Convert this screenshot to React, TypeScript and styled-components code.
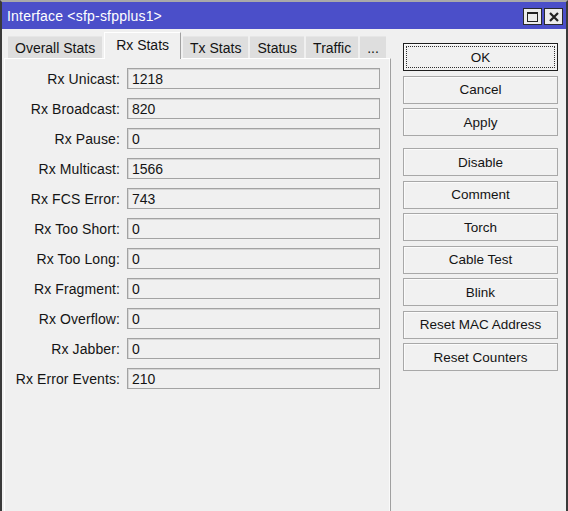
import React from 'react'
import styled, { createGlobalStyle, css } from 'styled-components'

const GlobalStyle = createGlobalStyle`
  html, body {
    margin: 0;
    padding: 0;
    background: #f0f0f0;
  }
  body {
    font-family: "Liberation Sans", Arial, sans-serif;
    color: #141414;
  }
`

const Window = styled.div`
  box-sizing: border-box;
  width: 568px;
  height: 511px;
  display: flex;
  flex-direction: column;
  background: #f0f0f0;
  border-top: 2px solid #a9a9a9;
  border-left: 2px solid #3a3a3a;
  border-right: 2px solid #3a3a3a;
  overflow: hidden;
`

const TitleBar = styled.div`
  height: 27px;
  flex: none;
  display: flex;
  align-items: center;
  justify-content: space-between;
  padding: 0 3px 0 5px;
  background: #4b4fc9;
  color: #fff;
  font-size: 14px;
  letter-spacing: 0.2px;
`

const TitleControls = styled.div`
  display: flex;
  gap: 2px;
  margin-top: 2px;
`

const ControlBox = styled.div`
  box-sizing: border-box;
  width: 19px;
  height: 17px;
  display: flex;
  align-items: center;
  justify-content: center;
  background: #ececec;
  border: 1px solid #2a2a2a;
`

const Body = styled.div`
  flex: 1;
  display: flex;
  min-height: 0;
`

const LeftColumn = styled.div`
  width: 389px;
  display: flex;
  flex-direction: column;
  padding-left: 2px;
  box-sizing: border-box;
`

const TabStrip = styled.div`
  height: 29px;
  flex: none;
  display: flex;
  align-items: flex-end;
  gap: 2px;
  padding-left: 4px;
  position: relative;
  z-index: 1;
`

const Tab = styled.div<{ $active?: boolean }>`
  box-sizing: border-box;
  height: 22px;
  display: flex;
  align-items: center;
  padding: 0 7px;
  font-size: 14px;
  background: #dedede;
  border-top: 1px solid #e6e6e6;
  white-space: nowrap;
  ${p => p.$active && css`
    height: 27px;
    margin-bottom: -1px;
    padding: 0 11px 2px;
    background: #f0f0f0;
    border-top: 1px solid #fff;
    border-left: 1px solid #fff;
    border-right: 1px solid #a0a0a0;
  `}
`

const Panel = styled.div`
  flex: 1;
  border-top: 1px solid #fff;
  border-left: 1px solid #fff;
  border-right: 1px solid #a0a0a0;
  box-shadow: inset -1px 0 0 #fafafa;
  padding-top: 9px;
  display: flex;
  flex-direction: column;
  gap: 9px;
`

const FieldRow = styled.div`
  display: grid;
  grid-template-columns: 115px 253px;
  column-gap: 7px;
  align-items: center;
`

const Label = styled.div`
  text-align: right;
  font-size: 14px;
  letter-spacing: 0.1px;
  white-space: nowrap;
`

const Value = styled.div`
  box-sizing: border-box;
  height: 21px;
  display: flex;
  align-items: center;
  padding-left: 4px;
  font-size: 14px;
  border: 1px solid #a3a3a3;
  box-shadow: inset 1px 1px 0 #d6d6d6;
`

const RightColumn = styled.div`
  flex: 1;
  padding: 14px 0 0 12px;
  display: flex;
  flex-direction: column;
`

const ButtonGroup = styled.div`
  display: flex;
  flex-direction: column;
  gap: 4.5px;
  & + & {
    margin-top: 12px;
  }
`

const Button = styled.div<{ $default?: boolean }>`
  box-sizing: border-box;
  position: relative;
  width: 155px;
  height: 28px;
  display: flex;
  align-items: center;
  justify-content: center;
  font-size: 13.5px;
  background: #f1f1f1;
  border: 1px solid #a8a8a8;
  box-shadow: inset 1px 1px 0 #fbfbfb;
  ${p => p.$default && css`
    border-color: #1e1e1e;
    &::after {
      content: '';
      position: absolute;
      inset: 2px;
      border: 1px dotted #303030;
    }
  `}
`

const fields: [string, string][] = [
  ['Rx Unicast:', '1218'],
  ['Rx Broadcast:', '820'],
  ['Rx Pause:', '0'],
  ['Rx Multicast:', '1566'],
  ['Rx FCS Error:', '743'],
  ['Rx Too Short:', '0'],
  ['Rx Too Long:', '0'],
  ['Rx Fragment:', '0'],
  ['Rx Overflow:', '0'],
  ['Rx Jabber:', '0'],
  ['Rx Error Events:', '210'],
]

const tabs = ['Overall Stats', 'Rx Stats', 'Tx Stats', 'Status', 'Traffic', '...']

const actions = ['Disable', 'Comment', 'Torch', 'Cable Test', 'Blink', 'Reset MAC Address', 'Reset Counters']

export default function App() {
  return (
    <>
      <GlobalStyle />
      <Window>
        <TitleBar>
          <span>Interface &lt;sfp-sfpplus1&gt;</span>
          <TitleControls>
            <ControlBox>
              <svg width="11" height="10" viewBox="0 0 11 10">
                <rect x="0.5" y="0.5" width="10" height="9" fill="none" stroke="#222" />
                <rect x="0" y="0" width="11" height="2" fill="#222" />
              </svg>
            </ControlBox>
            <ControlBox>
              <svg width="10" height="10" viewBox="0 0 10 10">
                <path d="M1 1 L9 9 M9 1 L1 9" stroke="#222" strokeWidth="2.2" />
              </svg>
            </ControlBox>
          </TitleControls>
        </TitleBar>
        <Body>
          <LeftColumn>
            <TabStrip>
              {tabs.map(t => (
                <Tab key={t} $active={t === 'Rx Stats'}>{t}</Tab>
              ))}
            </TabStrip>
            <Panel>
              {fields.map(([label, value]) => (
                <FieldRow key={label}>
                  <Label>{label}</Label>
                  <Value>{value}</Value>
                </FieldRow>
              ))}
            </Panel>
          </LeftColumn>
          <RightColumn>
            <ButtonGroup>
              <Button $default>OK</Button>
              <Button>Cancel</Button>
              <Button>Apply</Button>
            </ButtonGroup>
            <ButtonGroup>
              {actions.map(a => (
                <Button key={a}>{a}</Button>
              ))}
            </ButtonGroup>
          </RightColumn>
        </Body>
      </Window>
    </>
  )
}
